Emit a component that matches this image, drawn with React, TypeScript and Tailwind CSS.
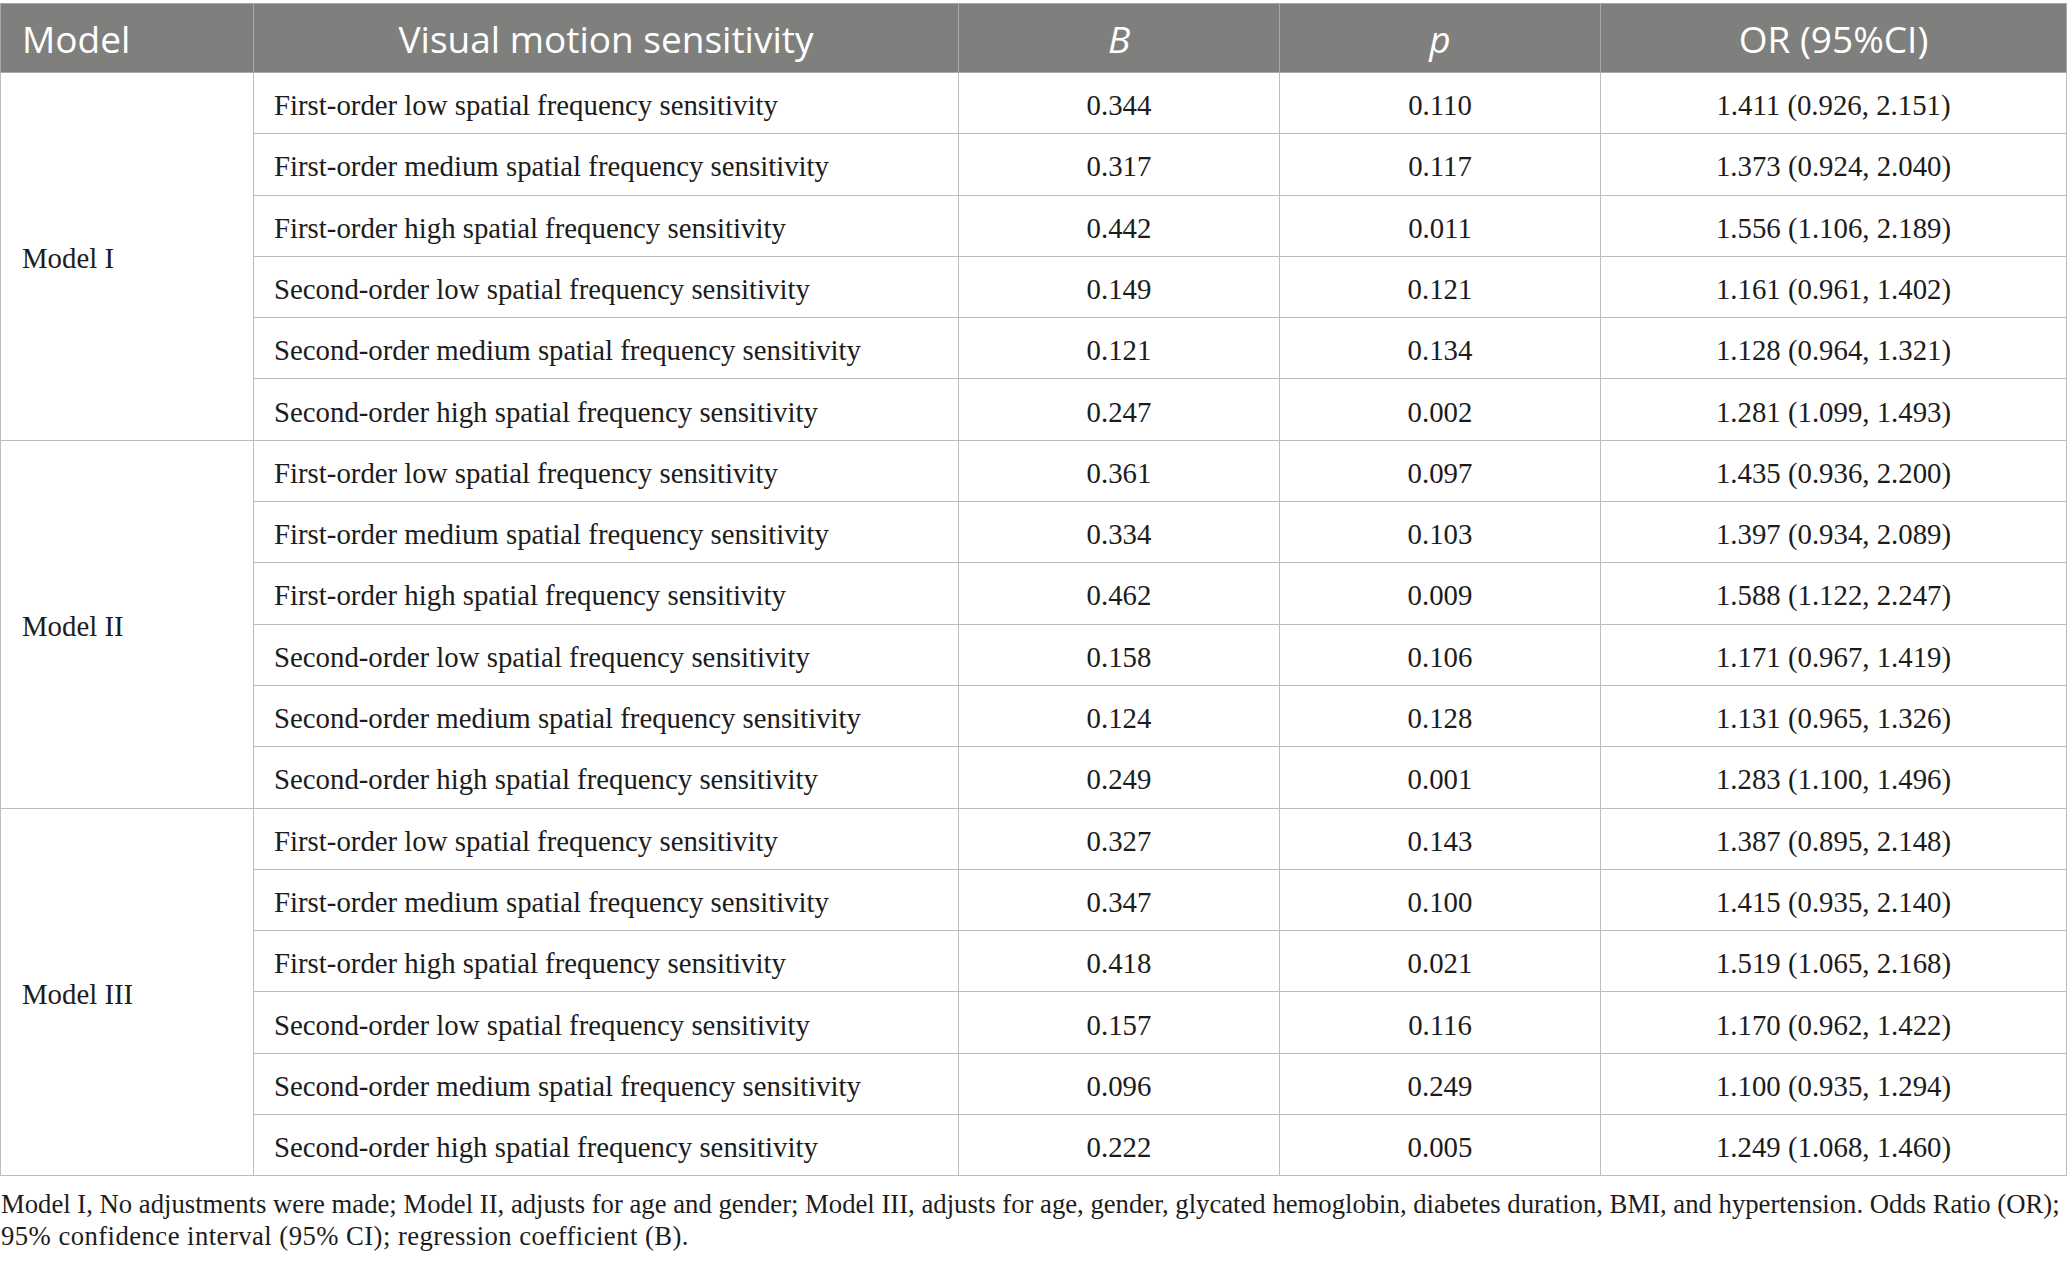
const groups = [
  {
    model: "Model I",
    rows: [
      ["First-order low spatial frequency sensitivity", "0.344", "0.110", "1.411 (0.926, 2.151)"],
      ["First-order medium spatial frequency sensitivity", "0.317", "0.117", "1.373 (0.924, 2.040)"],
      ["First-order high spatial frequency sensitivity", "0.442", "0.011", "1.556 (1.106, 2.189)"],
      ["Second-order low spatial frequency sensitivity", "0.149", "0.121", "1.161 (0.961, 1.402)"],
      ["Second-order medium spatial frequency sensitivity", "0.121", "0.134", "1.128 (0.964, 1.321)"],
      ["Second-order high spatial frequency sensitivity", "0.247", "0.002", "1.281 (1.099, 1.493)"],
    ],
  },
  {
    model: "Model II",
    rows: [
      ["First-order low spatial frequency sensitivity", "0.361", "0.097", "1.435 (0.936, 2.200)"],
      ["First-order medium spatial frequency sensitivity", "0.334", "0.103", "1.397 (0.934, 2.089)"],
      ["First-order high spatial frequency sensitivity", "0.462", "0.009", "1.588 (1.122, 2.247)"],
      ["Second-order low spatial frequency sensitivity", "0.158", "0.106", "1.171 (0.967, 1.419)"],
      ["Second-order medium spatial frequency sensitivity", "0.124", "0.128", "1.131 (0.965, 1.326)"],
      ["Second-order high spatial frequency sensitivity", "0.249", "0.001", "1.283 (1.100, 1.496)"],
    ],
  },
  {
    model: "Model III",
    rows: [
      ["First-order low spatial frequency sensitivity", "0.327", "0.143", "1.387 (0.895, 2.148)"],
      ["First-order medium spatial frequency sensitivity", "0.347", "0.100", "1.415 (0.935, 2.140)"],
      ["First-order high spatial frequency sensitivity", "0.418", "0.021", "1.519 (1.065, 2.168)"],
      ["Second-order low spatial frequency sensitivity", "0.157", "0.116", "1.170 (0.962, 1.422)"],
      ["Second-order medium spatial frequency sensitivity", "0.096", "0.249", "1.100 (0.935, 1.294)"],
      ["Second-order high spatial frequency sensitivity", "0.222", "0.005", "1.249 (1.068, 1.460)"],
    ],
  },
];

export default function App() {
  return (
    <div className="w-[2067px] min-h-[1267px] bg-white pt-[3px] text-[#1c1c1c] [font-family:'Liberation_Serif',serif]">
      <table className="w-full table-fixed border-collapse border border-[#bdbdbd]">
        <colgroup>
          <col className="w-[253px]" />
          <col className="w-[705px]" />
          <col className="w-[321px]" />
          <col className="w-[321px]" />
          <col />
        </colgroup>
        <thead>
          <tr className="h-[69px] bg-[#7f807e] text-white text-[37px] [font-family:'Open_Sans',sans-serif]">
            <th className="border border-[#a9a9a9] pl-[21px] pt-[2px] text-left font-normal">Model</th>
            <th className="border border-[#a9a9a9] pt-[2px] text-center font-normal">Visual motion sensitivity</th>
            <th className="border border-[#a9a9a9] pt-[2px] text-center font-normal italic">B</th>
            <th className="border border-[#a9a9a9] pt-[2px] text-center font-normal italic">p</th>
            <th className="border border-[#a9a9a9] pt-[2px] text-center font-normal">OR (95%CI)</th>
          </tr>
        </thead>
        <tbody className="text-[28.8px]">
          {groups.map((g) =>
            g.rows.map((r, i) => (
              <tr key={g.model + i} className="h-[61.3px]">
                {i === 0 && (
                  <td rowSpan={6} className="border border-[#bdbdbd] pl-[21px] pt-[5px] align-middle">
                    {g.model}
                  </td>
                )}
                <td className="border border-[#bdbdbd] pl-[20px] pt-[5px]">{r[0]}</td>
                <td className="border border-[#bdbdbd] pt-[5px] text-center">{r[1]}</td>
                <td className="border border-[#bdbdbd] pt-[5px] text-center">{r[2]}</td>
                <td className="border border-[#bdbdbd] pt-[5px] text-center">{r[3]}</td>
              </tr>
            ))
          )}
        </tbody>
      </table>
      <p className="mt-[12px] pl-[1px] text-[26.7px] leading-[32px]">
        Model I, No adjustments were made; Model II, adjusts for age and gender; Model III, adjusts for age, gender, glycated hemoglobin, diabetes duration, BMI, and hypertension. Odds Ratio (OR);
        <br />
        <span className="tracking-[0.45px]">95% confidence interval (95% CI); regression coefficient (B).</span>
      </p>
    </div>
  );
}
